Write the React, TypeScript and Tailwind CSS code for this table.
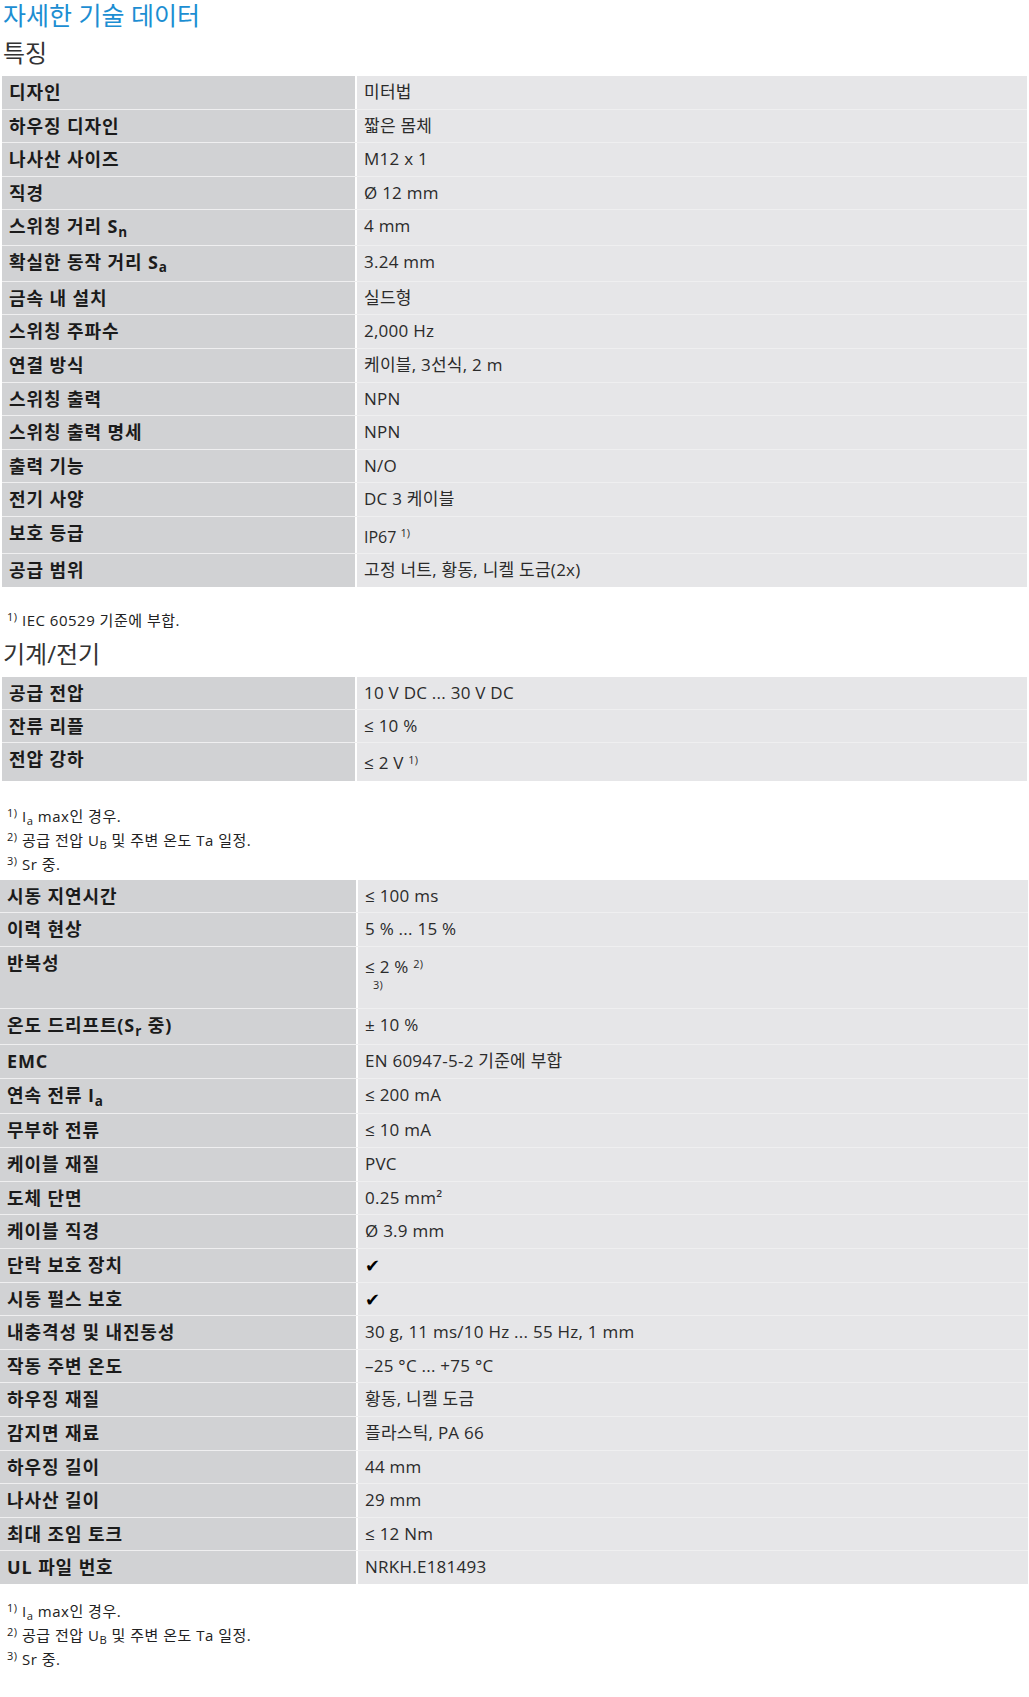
import type { ReactNode } from "react";

type Spec = {
  label: ReactNode;
  value: ReactNode;
  h?: string;
};

// heights exclude the 1px separator line between rows
const FEATURES: Spec[] = [
  { label: "디자인", value: "미터법" },
  { label: "하우징 디자인", value: "짧은 몸체" },
  { label: "나사산 사이즈", value: "M12 x 1" },
  { label: "직경", value: "Ø 12 mm" },
  { label: <>스위칭 거리 S<sub>n</sub></>, value: "4 mm", h: "h-[34.7px]" },
  { label: <>확실한 동작 거리 S<sub>a</sub></>, value: "3.24 mm", h: "h-[34.7px]" },
  { label: "금속 내 설치", value: "실드형" },
  { label: "스위칭 주파수", value: "2,000 Hz" },
  { label: "연결 방식", value: "케이블, 3선식, 2 m" },
  { label: "스위칭 출력", value: "NPN" },
  { label: "스위칭 출력 명세", value: "NPN" },
  { label: "출력 기능", value: "N/O" },
  { label: "전기 사양", value: "DC 3 케이블" },
  {
    label: "보호 등급",
    value: (
      <span className="inline-block pt-[4px] text-[16px] tracking-normal">
        IP67 <sup className="text-[11px]">1)</sup>
      </span>
    ),
    h: "h-[36.5px]",
  },
  { label: "공급 범위", value: "고정 너트, 황동, 니켈 도금(2x)" },
];

const ELECTRICAL: Spec[] = [
  { label: "공급 전압", value: "10 V DC ... 30 V DC", h: "h-[32.3px]" },
  { label: "잔류 리플", value: "≤ 10 %", h: "h-[32px]" },
  {
    label: "전압 강하",
    value: (
      <span className="inline-block pt-[4px]">
        ≤ 2 V <sup className="text-[11px]">1)</sup>
      </span>
    ),
    h: "h-[38px]",
  },
];

const CHECK = <span className="text-[18px] text-black">✔</span>;

const MORE: Spec[] = [
  { label: "시동 지연시간", value: "≤ 100 ms", h: "h-[32px]" },
  { label: "이력 현상", value: "5 % ... 15 %", h: "h-[33px]" },
  {
    label: "반복성",
    value: (
      <div>
        <span className="inline-block pt-[4px]">
          ≤ 2 % <sup className="text-[11px]">2)</sup>
        </span>
        <div className="pl-[8px] text-[11px] leading-[14px]">3)</div>
      </div>
    ),
    h: "h-[61px]",
  },
  { label: <>온도 드리프트(S<sub>r</sub> 중)</>, value: "± 10 %", h: "h-[35px]" },
  { label: "EMC", value: "EN 60947-5-2 기준에 부합", h: "h-[33px]" },
  { label: <>연속 전류 I<sub>a</sub></>, value: "≤ 200 mA", h: "h-[34px]" },
  { label: "무부하 전류", value: "≤ 10 mA", h: "h-[33px]" },
  { label: "케이블 재질", value: "PVC" },
  { label: "도체 단면", value: "0.25 mm²" },
  { label: "케이블 직경", value: "Ø 3.9 mm" },
  { label: "단락 보호 장치", value: CHECK },
  { label: "시동 펄스 보호", value: CHECK },
  { label: "내충격성 및 내진동성", value: "30 g, 11 ms/10 Hz ... 55 Hz, 1 mm" },
  { label: "작동 주변 온도", value: "–25 °C ... +75 °C" },
  { label: "하우징 재질", value: "황동, 니켈 도금" },
  { label: "감지면 재료", value: "플라스틱, PA 66" },
  { label: "하우징 길이", value: "44 mm" },
  { label: "나사산 길이", value: "29 mm" },
  { label: "최대 조임 토크", value: "≤ 12 Nm" },
  { label: "UL 파일 번호", value: "NRKH.E181493" },
];

function SpecTable({ rows, wide }: { rows: Spec[]; wide?: boolean }) {
  return (
    <div className={`flex flex-col gap-px bg-[#efeff0] ${wide ? "mr-px" : "mx-[2px]"}`}>
      {rows.map((row, i) => (
        <div key={i} className={`flex gap-[2px] bg-white ${row.h ?? "h-[32.6px]"}`}>
          <div
            className={`${wide ? "w-[356px]" : "w-[353px]"} shrink-0 bg-[#d1d2d4] pl-[7px] pt-[5px] text-[18px] font-bold leading-[22px] tracking-[0.9px] text-[#1b1b1b]`}
          >
            {row.label}
          </div>
          <div className="flex-1 bg-[#e6e6e8] pl-[7px] pt-[5px] text-[17px] leading-[22px] tracking-[0.25px] text-[#2b2b2b]">
            {row.value}
          </div>
        </div>
      ))}
    </div>
  );
}

function Note({ n, children }: { n: string; children: ReactNode }) {
  return (
    <div className="h-[24px] pl-[7px] text-[15px] leading-[24px] tracking-[0.5px] text-[#222]">
      <sup className="text-[11px]">{n}</sup> {children}
    </div>
  );
}

function SensorNotes() {
  return (
    <>
      <Note n="1)">
        I<sub>a</sub> max인 경우.
      </Note>
      <Note n="2)">
        공급 전압 U<sub>B</sub> 및 주변 온도 Ta 일정.
      </Note>
      <Note n="3)">Sr 중.</Note>
    </>
  );
}

export default function App() {
  return (
    <div className="w-[1029px] min-h-[1697px] bg-white font-['Open_Sans','Noto_Sans_CJK_KR',sans-serif]">
      <h1 className="h-[30px] pl-[3px] text-[25px] font-normal leading-[30px] text-[#1c8ed2]">
        자세한 기술 데이터
      </h1>
      <h2 className="py-[6px] pl-[3px] text-[24px] font-normal leading-[34px] text-[#333]">특징</h2>
      <SpecTable rows={FEATURES} />

      <div className="mt-[21px]">
        <Note n="1)">IEC 60529 기준에 부합.</Note>
      </div>

      <h2 className="mt-[5px] mb-[6px] pl-[3px] text-[24px] font-normal leading-[34px] text-[#333]">
        기계/전기
      </h2>
      <SpecTable rows={ELECTRICAL} />

      <div className="mt-[23px] mb-[4px]">
        <SensorNotes />
      </div>
      <SpecTable rows={MORE} wide />

      <div className="mt-[15px]">
        <SensorNotes />
      </div>
    </div>
  );
}
